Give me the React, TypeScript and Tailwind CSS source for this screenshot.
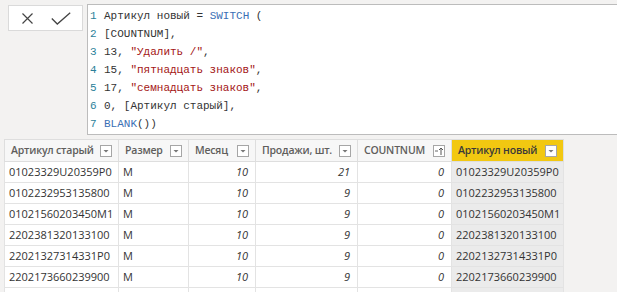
import React from 'react';

type Col = { title: string; width: number; sorted?: boolean; active?: boolean; align: 'left' | 'right' };

const columns: Col[] = [
  { title: 'Артикул старый', width: 114, align: 'left' },
  { title: 'Размер', width: 70, align: 'left' },
  { title: 'Месяц', width: 67, align: 'right' },
  { title: 'Продажи, шт.', width: 102, align: 'right' },
  { title: 'COUNTNUM', width: 94, align: 'right', sorted: true },
  { title: 'Артикул новый', width: 112, align: 'left', active: true },
];

const rows = [
  ['01023329U20359P0', 'M', '10', '21', '0', '01023329U20359P0'],
  ['0102232953135800', 'M', '10', '9', '0', '0102232953135800'],
  ['01021560203450M1', 'M', '10', '9', '0', '01021560203450M1'],
  ['2202381320133100', 'M', '10', '9', '0', '2202381320133100'],
  ['22021327314331P0', 'M', '10', '9', '0', '22021327314331P0'],
  ['2202173660239900', 'M', '10', '9', '0', '2202173660239900'],
  ['', '', '', '', '', ''],
];

const FilterButton = ({ sorted }: { sorted?: boolean }) => (
  <span className="flex h-[12px] w-[12px] shrink-0 items-center justify-center border border-[#a6a6a6] bg-white">
    {sorted ? (
      <svg width="10" height="10" viewBox="0 0 10 10">
        <path d="M1 5h3" stroke="#666" strokeWidth="1" />
        <path d="M7 9V2M5 4l2-2 2 2" stroke="#555" strokeWidth="1" fill="none" />
      </svg>
    ) : (
      <svg width="8" height="8" viewBox="0 0 8 8">
        <path d="M1.5 3h5L4 5.5z" fill="#777" />
      </svg>
    )}
  </span>
);

const Code = () => {
  const str = 'text-[#a31515]';
  const kw = 'text-[#3a6fb5]';
  const lines: React.ReactNode[] = [
    <>Артикул новый = <span className={kw}>SWITCH</span> (</>,
    <>[COUNTNUM],</>,
    <>13, <span className={str}>"Удалить /"</span>,</>,
    <>15, <span className={str}>"пятнадцать знаков"</span>,</>,
    <>17, <span className={str}>"семнадцать знаков"</span>,</>,
    <>0, [Артикул старый],</>,
    <><span className={kw}>BLANK</span>())</>,
  ];
  return (
    <div className="pt-[2px] font-['Liberation_Mono',monospace] text-[11px] leading-[18px] text-[#333]">
      {lines.map((l, i) => (
        <div key={i} className="flex whitespace-pre">
          <span className="w-[16px] pl-[2px] text-[#2b7f9a]">{i + 1}</span>
          <span>{l}</span>
        </div>
      ))}
    </div>
  );
};

export default function App() {
  return (
    <div className="h-[292px] w-[617px] overflow-hidden bg-[#f3f2f1] font-['Open_Sans',sans-serif]">
      <div className="flex h-[135px] pt-[4px]">
        <div className="w-[87px] pl-[8px] pt-[1px]">
          <div className="flex h-[26px] w-[75px] items-center justify-center gap-[17px] border border-[#dadada] bg-white">
            <svg width="13" height="11" viewBox="0 0 13 11">
              <path d="M1.5 0.5l10 10M11.5 0.5l-10 10" stroke="#444" strokeWidth="1.2" />
            </svg>
            <svg width="20" height="13" viewBox="0 0 20 13">
              <path d="M0.8 6.5l5.5 5.5L19.2 0.8" stroke="#444" strokeWidth="1.3" fill="none" />
            </svg>
          </div>
        </div>
        <div className="flex-1 border-y border-l border-[#bcbcbc] bg-white">
          <Code />
        </div>
      </div>
      <div className="ml-[4px] mt-[4px]">
        <table className="table-fixed border-collapse text-[11px] text-[#333]">
          <colgroup>
            {columns.map((c) => (
              <col key={c.title} style={{ width: c.width }} />
            ))}
          </colgroup>
          <thead>
            <tr className="h-[22px]">
              {columns.map((c) => (
                <th
                  key={c.title}
                  className={
                    'border border-[#dedede] pl-[6px] pr-[6px] py-0 text-left text-[10.5px] font-semibold tracking-[-0.2px] ' +
                    (c.active ? 'bg-[#f2c811] text-[#3b3a39]' : 'bg-[#f7f7f7] text-[#605e5c]')
                  }
                >
                  <div className="flex items-center justify-between">
                    <span className="whitespace-nowrap">{c.title}</span>
                    <FilterButton sorted={c.sorted} />
                  </div>
                </th>
              ))}
            </tr>
          </thead>
          <tbody>
            {rows.map((r, i) => (
              <tr key={i} className="h-[21px]">
                {r.map((v, j) => (
                  <td
                    key={j}
                    className={
                      'border border-[#e3e3e3] py-0 whitespace-nowrap ' +
                      (columns[j].align === 'right' ? 'pr-[7px] text-right italic ' : 'pl-[4px] text-left ') +
                      (columns[j].active ? 'bg-[#ebebeb]' : 'bg-white')
                    }
                  >
                    {v}
                  </td>
                ))}
              </tr>
            ))}
          </tbody>
        </table>
      </div>
    </div>
  );
}
